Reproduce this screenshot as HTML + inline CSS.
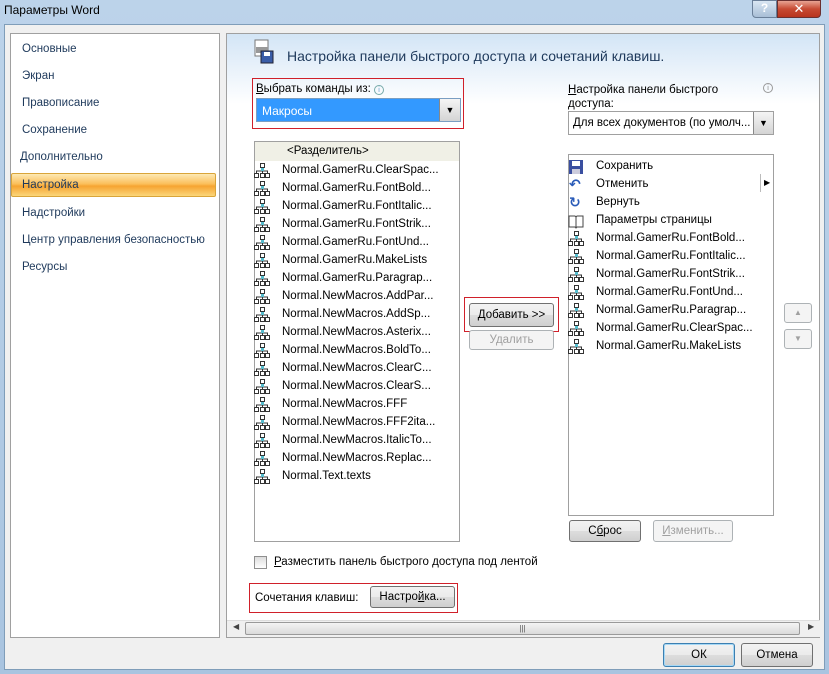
<!DOCTYPE html><html><head><meta charset="utf-8"><style>
*{box-sizing:border-box}body{margin:0;width:829px;height:674px;overflow:hidden;font-family:"Liberation Sans","DejaVu Sans",sans-serif;font-size:11.5px;color:#000;background:#fff}
.win{position:absolute;left:0;top:0;width:829px;height:674px;background:linear-gradient(#bcd3ea,#a9c4e0);}
.title{position:absolute;left:4px;top:3px;font-size:12px;color:#000}
.body{position:absolute;left:4px;top:24px;width:821px;height:646px;background:#f0f0f0;border:1px solid #7f9db9}
.a{position:absolute;white-space:nowrap}
.lp{position:absolute;left:5px;top:8px;width:210px;height:605px;background:#fff;border:1px solid #a0a0a0}
.lp div{position:absolute;left:11px;color:#1e395b;font-size:11.5px}
.rp{position:absolute;left:221px;top:8px;width:594px;height:605px;background:linear-gradient(#d3e5f6 0,#fff 70px);border:1px solid #a0a0a0}
.list{position:absolute;background:#fff;border:1px solid #a0a0a0}
.it{position:absolute;left:26px;font-size:11.5px}
.btn{position:absolute;border:1px solid #707070;border-radius:3px;background:linear-gradient(#f2f2f2,#ebebeb 50%,#dddddd 51%,#cfcfcf);text-align:center;font-size:11.5px}
.dis{color:#a0a0a0;border-color:#adb2b5;background:#f4f4f4}
.red{position:absolute;border:1px solid #d0202a}
</style></head><body><div class="win">
<div class="title">Параметры Word</div>
<div class="a" style="left:752px;top:0;width:25px;height:18px;border:1px solid #6a7f99;border-radius:0 0 0 4px;background:linear-gradient(#d9e6f3,#a8bed6);text-align:center;color:#fff;font-weight:bold;font-size:12px">?</div>
<div class="a" style="left:777px;top:0;width:44px;height:18px;border:1px solid #6a3030;border-radius:0 0 4px 0;background:linear-gradient(#e8a493,#c74a33 50%,#b8341e);text-align:center;color:#fff;font-weight:bold;font-size:13px">✕</div>
<div class="body">
<div class="lp">
<div style="top:9px">Основные</div><div style="top:36px">Экран</div><div style="top:63px">Правописание</div><div style="top:90px">Сохранение</div><div style="top:117px;left:9px">Дополнительно</div>
<div style="top:139px;left:0px;width:205px;height:24px;border:1px solid #d9a53a;border-radius:2px;background:linear-gradient(#fde9b4,#fbbf5a 45%,#f6a431 55%,#fbd67a)"></div>
<div style="top:145px">Настройка</div>
<div style="top:173px">Надстройки</div><div style="top:200px">Центр управления безопасностью</div><div style="top:227px">Ресурсы</div>
</div>
<div class="rp"></div>
<svg class="a" style="left:248px;top:14px" width="22" height="26"><rect x="2" y="1" width="13" height="16" fill="#fff" stroke="#777"/><rect x="3" y="8" width="12" height="6" fill="#999"/><rect x="8" y="12" width="12" height="12" fill="#3a5da8" stroke="#223"/><rect x="11" y="13" width="6" height="4" fill="#fff"/></svg>
<div class="a" style="left:282px;top:23px;font-size:14px;color:#1e395b">Настройка панели быстрого доступа и сочетаний клавиш.</div>
<div class="red" style="left:247px;top:53px;width:212px;height:51px"></div>
<div class="a" style="left:251px;top:58px"><u>В</u>ыбрать команды из: <span style="display:inline-block;width:10px;height:10px;border:1px solid #7aa;border-radius:50%;font-size:7px;text-align:center;line-height:9px;color:#69c">i</span></div>
<div class="a" style="left:251px;top:73px;width:205px;height:24px;background:#3399ff;color:#fff;border:1px solid #7a9ec2;padding:5px 5px;font-size:12px">Макросы</div>
<div class="a" style="left:434px;top:74px;width:21px;height:22px;background:linear-gradient(#f5f5f5,#d4d4d4);border-left:1px solid #888;text-align:center;font-size:9px;line-height:22px">▼</div>
<div class="list" style="left:249px;top:116px;width:206px;height:401px">
<div class="a" style="left:0;top:0;width:204px;height:19px;background:#f0f0e6"></div>
<div class="it" style="left:32px;top:3px">&lt;Разделитель&gt;</div>
</div>
<div id="L"></div>
<div class="red" style="left:459px;top:272px;width:95px;height:35px"></div>
<div class="btn" style="left:464px;top:278px;width:85px;height:24px;line-height:22px"><u>Д</u>обавить &gt;&gt;</div>
<div class="btn dis" style="left:464px;top:305px;width:85px;height:20px;line-height:18px">Удалить</div>
<div class="a" style="left:563px;top:58px;line-height:14px"><u>Н</u>астройка панели быстрого<br>доступа:</div>
<div class="a" style="left:758px;top:58px;width:10px;height:10px;border:1px solid #999;border-radius:50%;font-size:7px;text-align:center;line-height:9px;color:#888">i</div>
<div class="a" style="left:563px;top:86px;width:206px;height:24px;background:#fff;border:1px solid #a0a0a0;padding:5px 4px">Для всех документов (по умолч...</div>
<div class="a" style="left:748px;top:87px;width:20px;height:22px;background:linear-gradient(#f5f5f5,#d4d4d4);border-left:1px solid #888;text-align:center;font-size:9px;line-height:22px">▼</div>
<div class="list" style="left:563px;top:129px;width:206px;height:362px"></div>
<div class="a" style="left:755px;top:149px;height:18px;border-left:1px solid #bbb;padding-left:3px;font-size:8px;line-height:18px">▶</div>
<div id="R"></div>
<div class="btn dis" style="left:779px;top:278px;width:28px;height:20px;font-size:8px;line-height:18px">▲</div>
<div class="btn dis" style="left:779px;top:304px;width:28px;height:20px;font-size:8px;line-height:18px">▼</div>
<div class="btn" style="left:564px;top:495px;width:72px;height:22px;line-height:20px">С<u>б</u>рос</div>
<div class="btn dis" style="left:648px;top:495px;width:80px;height:22px;line-height:20px"><u>И</u>зменить...</div>
<div class="a" style="left:249px;top:531px;width:13px;height:13px;border:1px solid #8f8f8f;background:linear-gradient(#ddd,#fff)"></div>
<div class="a" style="left:269px;top:531px"><u>Р</u>азместить панель быстрого доступа под лентой</div>
<div class="red" style="left:244px;top:558px;width:209px;height:30px"></div>
<div class="a" style="left:250px;top:567px">Сочетания клавиш:</div>
<div class="btn" style="left:365px;top:561px;width:85px;height:22px;line-height:20px">Настро<u>й</u>ка...</div>
<div class="a" style="left:222px;top:595px;width:593px;height:17px;background:#f0f0f0;border-top:1px solid #ddd"></div>
<div class="a" style="left:240px;top:597px;width:555px;height:13px;border:1px solid #9a9a9a;border-radius:2px;background:linear-gradient(#f4f4f4,#dadada);text-align:center;font-size:8px;line-height:11px;color:#555">|||</div>
<div class="a" style="left:228px;top:597px;font-size:8px;color:#444">◀</div><div class="a" style="left:803px;top:597px;font-size:8px;color:#444">▶</div>
<div class="btn" style="left:658px;top:618px;width:72px;height:24px;line-height:22px;border-color:#3c7fb1;box-shadow:inset 0 0 0 1px #a6d8f5">ОК</div>
<div class="btn" style="left:736px;top:618px;width:72px;height:24px;line-height:22px">Отмена</div>
</div></div>
<script>
var l=["Normal.GamerRu.ClearSpac...","Normal.GamerRu.FontBold...","Normal.GamerRu.FontItalic...","Normal.GamerRu.FontStrik...","Normal.GamerRu.FontUnd...","Normal.GamerRu.MakeLists","Normal.GamerRu.Paragrap...","Normal.NewMacros.AddPar...","Normal.NewMacros.AddSp...","Normal.NewMacros.Asterix...","Normal.NewMacros.BoldTo...","Normal.NewMacros.ClearC...","Normal.NewMacros.ClearS...","Normal.NewMacros.FFF","Normal.NewMacros.FFF2ita...","Normal.NewMacros.ItalicTo...","Normal.NewMacros.Replac...","Normal.Text.texts"];
var m='<svg width="16" height="16" style="position:absolute;left:-28px;top:-1px"><g fill="#fff" stroke="#333" stroke-width="1"><rect x="6.5" y="0.5" width="4" height="4"/><rect x="0.5" y="10.5" width="4" height="4"/><rect x="6.5" y="10.5" width="4" height="4"/><rect x="11.5" y="10.5" width="4" height="4"/></g><path d="M8.5 5v3M2.5 10V8h11v2M8.5 8v2" stroke="#333" fill="none"/><rect x="7" y="5" width="3" height="3" fill="#5bc"/></svg>';
var h='';l.forEach(function(t,i){h+='<div class="a" style="left:277px;top:'+(139+18*i)+'px">'+m+t+'</div>'});
document.getElementById('L').outerHTML=h;
var r=["Сохранить","Отменить","Вернуть","Параметры страницы","Normal.GamerRu.FontBold...","Normal.GamerRu.FontItalic...","Normal.GamerRu.FontStrik...","Normal.GamerRu.FontUnd...","Normal.GamerRu.Paragrap...","Normal.GamerRu.ClearSpac...","Normal.GamerRu.MakeLists"];
var ic=['<svg width="16" height="16" style="position:absolute;left:-28px;top:-1px"><rect x="1" y="1" width="14" height="14" fill="#3a4fa0"/><rect x="4" y="2" width="8" height="5" fill="#fff"/><rect x="4" y="10" width="8" height="5" fill="#ccd"/></svg>','<div style="position:absolute;left:-27px;top:-2px;color:#2a5bb8;font-weight:bold;font-size:14px">↶</div>','<div style="position:absolute;left:-27px;top:-2px;color:#2a5bb8;font-weight:bold;font-size:14px">↻</div>','<svg width="16" height="16" style="position:absolute;left:-28px;top:-1px"><path d="M1 3h6l1 1 1-1h6v11H9l-1 1-1-1H1z" fill="#fff" stroke="#444"/><path d="M8 4v10" stroke="#444"/></svg>'];
h='';r.forEach(function(t,i){h+='<div class="a" style="left:591px;top:'+(135+18*i)+'px">'+(ic[i]||m)+t+'</div>'});
document.getElementById('R').outerHTML=h;
</script>
</body></html>
